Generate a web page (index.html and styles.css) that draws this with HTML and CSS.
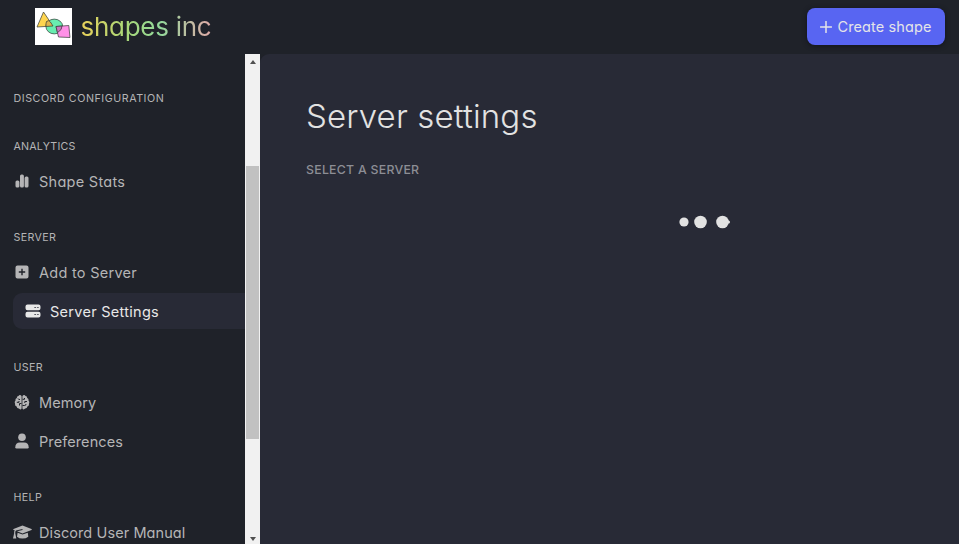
FILE: index.html
```html
<!DOCTYPE html>
<html lang="en">
<head>
<meta charset="utf-8">
<title>shapes inc</title>
<link rel="stylesheet" href="styles.css">
</head>
<body>
<header class="topbar">
  <div class="brand">
    <svg class="logo" viewBox="0 0 37 37"><rect width="37" height="37" fill="#fff"/><g stroke="#333a35" stroke-width=".7" stroke-linejoin="round"><path d="M8.500 4 18 18 2 19z" fill="#ffd54f"/><ellipse cx="19.300" cy="18.500" rx="8.400" ry="7.400" fill="#69edb0"/><path d="M21 18.500 33.800 17.500 35 29.500 23.500 29z" fill="#ff91e7"/><path d="M11.500 13.500Q14 11.500 15.400 14L18 18 11 18.500Q10.700 15.500 11.500 13.500z" fill="#dfb54c"/><path d="M21 18.500 27 18Q27.500 21.500 22.500 24.700z" fill="#c879bd"/></g></svg>
    <span class="name">shapes inc</span>
  </div>
  <button class="create"><svg viewBox="0 0 12 12"><path d="M6 .5v11M.5 6h11" stroke="#e4e4e8" stroke-width="1.5" stroke-linecap="round"/></svg><span>Create shape</span></button>
</header>
<div class="body">
  <nav class="sidebar">
    <h2 class="config">DISCORD CONFIGURATION</h2>
    <section>
      <h2 class="analytics">ANALYTICS</h2>
      <a class="item"><svg viewBox="0 0 16 16"><rect x="1.500" y="7.500" width="3.900" height="7" rx="1.500"/><rect x="6" y="1.500" width="3.900" height="13" rx="1.500"/><rect x="10.600" y="3.500" width="3.900" height="11" rx="1.500"/></svg><span>Shape Stats</span></a>
    </section>
    <section>
      <h2>SERVER</h2>
      <a class="item"><svg viewBox="0 0 16 16"><path fill-rule="evenodd" d="M3.500 1.500h9a2 2 0 0 1 2 2v9a2 2 0 0 1-2 2h-9a2 2 0 0 1-2-2v-9a2 2 0 0 1 2-2zM7.300 4.800v2.500H4.800v1.400h2.500v2.500h1.400V8.700h2.500V7.300H8.700V4.800z"/></svg><span>Add to Server</span></a>
      <a class="item active"><svg viewBox="0 0 16 16"><path fill-rule="evenodd" d="M2.500 1.500h11a2 2 0 0 1 2 2v1.700a2 2 0 0 1-2 2h-11a2 2 0 0 1-2-2V3.500a2 2 0 0 1 2-2zm6.800 2.400v.9h1.800v-.9zm2.800 0v.9h1.600v-.9zM2.500 8.800h11a2 2 0 0 1 2 2v1.700a2 2 0 0 1-2 2h-11a2 2 0 0 1-2-2v-1.700a2 2 0 0 1 2-2zm6.800 2.400v.9h1.800v-.9zm2.800 0v.9h1.600v-.9z"/></svg><span>Server Settings</span></a>
    </section>
    <section>
      <h2>USER</h2>
      <a class="item tight"><svg viewBox="0 0 16 16"><path d="M7.600 2.300A1.700 1.700 0 0 0 4.500 1.900Q2.800 2 2.800 4 1 4.600 1.500 6.400 0 8 1 9.600.6 12 2.600 12.500q.3 2 2.200 2.100 1.800 1.700 2.800-.2zM8.400 2.300a1.700 1.700 0 0 1 3.100-.4Q13.200 2 13.200 4 15 4.600 14.500 6.400 16 8 15 9.600q.4 2.400-1.600 2.900-.3 2-2.200 2.100-1.800 1.700-2.800-.2z"/><path class="fold" d="M4 4.500q.3 1.200 2 1M2.800 8.300H5V7M7.500 9.500H5.500v2M8.500 5.300h2V4M13 7.500h-2.200V9M8.500 11.500h2.200q1.300 0 1.300-1.500"/></svg><span>Memory</span></a>
      <a class="item tight"><svg viewBox="0 0 16 16"><circle cx="8" cy="4.300" r="3.800"/><path d="M1.300 14.300Q1.300 9.500 6 9.500h4q4.700 0 4.700 4.800 0 1.200-1.200 1.200h-11q-1.200 0-1.200-1.200z"/></svg><span>Preferences</span></a>
    </section>
    <section>
      <h2>HELP</h2>
      <a class="item tight"><svg class="cap" viewBox="0 0 19 16"><path d="M9.500 1.500 18.500 5q.8.500 0 1L9.500 9.400 4 7.300 9.500 6V5L3 6.600Q2 7.500 2.300 9.500L3.300 14.500H0L1.100 9.500Q1 7 1.700 6.300L.5 6Q-.2 5.500.5 5z"/><path d="m4.600 8.700 4.900 1.900L14.800 8.700l.5 4q-2.500 1.900-5.800 1.900T4 12.700z"/></svg><span>Discord User Manual</span></a>
    </section>
  </nav>
  <div class="scroll"><i class="up"></i><i class="thumb"></i><i class="down"></i></div>
  <main>
    <h1>Server settings</h1>
    <h3>SELECT A SERVER</h3>
    <svg class="loader" viewBox="0 0 54 16"><circle cx="7" cy="8" r="4.600"/><circle cx="23.500" cy="8" r="6.300"/><circle cx="45.500" cy="8" r="6.300"/><circle cx="51.500" cy="8" r="1.500"/></svg>
  </main>
</div>
</body>
</html>
```
FILE: styles.css
```css
* { box-sizing: border-box; }
body { margin: 0; height: 544px; overflow: hidden; background: #1f2229; color: #b5b5b6; font-family: Inter, "Open Sans", sans-serif; font-feature-settings: "cv11"; display: flex; flex-direction: column; }
h1, h2, h3 { margin: 0; white-space: nowrap; }
.topbar { height: 53px; flex: none; display: flex; align-items: center; justify-content: space-between; padding: 0 14px 0 35px; }
.brand { display: flex; align-items: center; gap: 8.500px; }
.logo { width: 37px; height: 37px; }
.name { font-size: 26px; line-height: 34px; letter-spacing: -0.28px; padding-top: 1px; color: transparent; background: linear-gradient(90deg, #e8d05a 0%, #a9d879 35%, #92d99a 60%, #dfaaa8 100%); background-clip: text; -webkit-background-clip: text; }
.create { width: 138px; height: 37px; padding: 0; border: 0; border-radius: 8px; background: #5865f2; color: #e4e4e8; display: flex; align-items: center; justify-content: center; gap: 5px; font: inherit; font-size: 14.500px; letter-spacing: .12px; font-feature-settings: "cv11"; box-shadow: 0 1px 5px #12151b; white-space: nowrap; }
.create svg { width: 12px; height: 12px; }
.body { flex: 1; min-height: 0; display: flex; }
.sidebar { width: 245px; flex: none; overflow: hidden; padding: 37px 0 0 13px; }
h2 { font-size: 10.700px; line-height: 18px; font-weight: 400; letter-spacing: .33px; padding-left: .5px; }
.config { margin-bottom: 30px; letter-spacing: .54px; }
.analytics { letter-spacing: .18px; }
section { margin-bottom: 30px; }
section h2 { margin-bottom: 7px; }
.item { height: 36px; display: flex; align-items: center; gap: 9px; padding-left: 1px; font-size: 14.500px; letter-spacing: .28px; white-space: nowrap; }
.tight { letter-spacing: .09px; }
.item + .item { margin-top: 3px; }
.item svg { width: 16px; height: 16px; fill: currentColor; overflow: visible; flex: none; }
.item svg .fold { fill: none; stroke: #1f2229; stroke-width: 1; }
.item .cap { width: 19px; margin: 0 -2px 0 -1px; }
.active { color: #e8e8e8; background: #282a36; border-radius: 9px 0 0 9px; padding-left: 12px; }
.scroll { width: 15px; flex: none; background: #f1f1f1; display: flex; flex-direction: column; align-items: center; margin-top: 1px; }
.thumb { width: 13px; height: 273px; background: #c1c1c1; margin-top: 102px; }
.up, .down { width: 0; height: 0; border: 3.500px solid transparent; }
.up { border-top: 0; border-bottom: 4px solid #505050; margin-top: 6px; }
.down { border-bottom: 0; border-top: 4px solid #505050; margin: auto 0 3px; }
main { flex: 1; min-width: 0; margin-top: 1px; background: #282a36; border-radius: 9px 0 0; padding: 39px 46px; display: flex; flex-direction: column; }
h1 { font-size: 33px; line-height: 46px; font-weight: 300; letter-spacing: .14px; color: #e2e2e2; }
h3 { margin-top: 22px; font-size: 12.300px; line-height: 18px; font-weight: 500; letter-spacing: .27px; color: #8d8e95; }
.loader { width: 54px; height: 16px; fill: #e2e2e2; margin: 35px 0 0 371px; }
```
